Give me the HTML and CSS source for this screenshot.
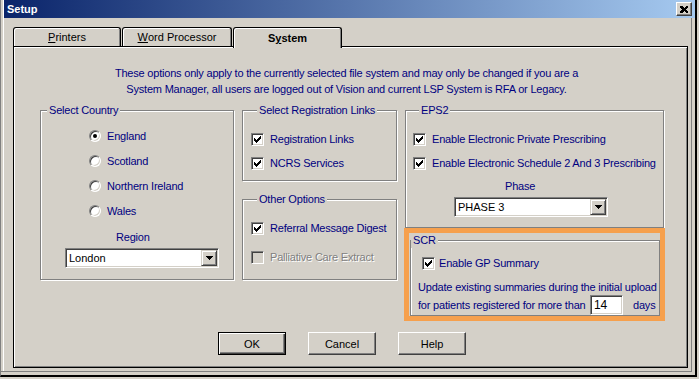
FILE: index.html
```html
<!DOCTYPE html>
<html lang="en">
<head>
    <meta charset="UTF-8">
    <meta name="viewport" content="width=device-width, initial-scale=1.0">
    <title>Setup</title>
    <link rel="stylesheet" href="styles.css">
</head>
<body>
    <div class="window">
        <div class="frame">
            <div class="titlebar">
                <span class="title">Setup</span>
                <button class="close-btn">
                    <svg width="8" height="7" viewBox="0 0 8 7" shape-rendering="crispEdges">
                        <path d="M0 0h2l2 2 2-2h2v1l-2 2.5 2 2.5v1h-2l-2-2-2 2h-2v-1l2-2.5-2-2.5z" fill="#000"/>
                    </svg>
                </button>
            </div>

            <div class="tabs">
                <div class="tab tab-printers"><u>P</u>rinters</div>
                <div class="tab tab-word"><u>W</u>ord Processor</div>
                <div class="tab tab-system active">S<u>y</u>stem</div>
            </div>

            <div class="panel">
                <p class="info">These options only apply to the currently selected file system and may only be changed if you are a<br>System Manager, all users are logged out of Vision and current LSP System is RFA or Legacy.</p>

                <div class="groups">
                    <div class="col col-country">
                        <fieldset class="group country">
                            <legend>Select Country</legend>
                            <div class="radio-list">
                                <label class="opt"><span class="radio checked"></span>England</label>
                                <label class="opt"><span class="radio"></span>Scotland</label>
                                <label class="opt"><span class="radio"></span>Northern Ireland</label>
                                <label class="opt"><span class="radio"></span>Wales</label>
                            </div>
                            <div class="region-label">Region</div>
                            <div class="combo region-combo">
                                <span class="combo-text">London</span>
                                <span class="combo-btn">
                                    <svg width="7" height="4" viewBox="0 0 7 4" shape-rendering="crispEdges"><path d="M0 0h7l-3.5 4z" fill="#000"/></svg>
                                </span>
                            </div>
                        </fieldset>
                    </div>

                    <div class="col col-links">
                        <fieldset class="group links">
                            <legend>Select Registration Links</legend>
                            <label class="opt first"><span class="check on"></span>Registration Links</label>
                            <label class="opt"><span class="check on"></span>NCRS Services</label>
                        </fieldset>
                        <fieldset class="group other">
                            <legend>Other Options</legend>
                            <label class="opt first"><span class="check on"></span>Referral Message Digest</label>
                            <label class="opt disabled"><span class="check"></span>Palliative Care Extract</label>
                        </fieldset>
                    </div>

                    <div class="col col-eps">
                        <fieldset class="group eps">
                            <legend>EPS2</legend>
                            <label class="opt first"><span class="check on"></span>Enable Electronic Private Prescribing</label>
                            <label class="opt"><span class="check on"></span>Enable Electronic Schedule 2 And 3 Prescribing</label>
                            <div class="phase-label">Phase</div>
                            <div class="combo phase-combo">
                                <span class="combo-text">PHASE 3</span>
                                <span class="combo-btn">
                                    <svg width="7" height="4" viewBox="0 0 7 4" shape-rendering="crispEdges"><path d="M0 0h7l-3.5 4z" fill="#000"/></svg>
                                </span>
                            </div>
                        </fieldset>
                        <div class="highlight">
                            <fieldset class="group scr">
                                <legend>SCR</legend>
                                <label class="opt gp"><span class="check on"></span>Enable GP Summary</label>
                                <div class="scr-text">Update existing summaries during the initial upload</div>
                                <div class="scr-line">
                                    <span class="scr-prefix">for patients registered for more than</span>
                                    <span class="field">14</span>
                                    <span class="days">days</span>
                                </div>
                            </fieldset>
                        </div>
                    </div>
                </div>

                <div class="buttons">
                    <button class="btn default">OK</button>
                    <button class="btn">Cancel</button>
                    <button class="btn">Help</button>
                </div>
            </div>
        </div>
    </div>

    <script>
        document.querySelectorAll(".check.on").forEach(e => {
            e.innerHTML = '<svg width="11" height="11" viewBox="1 1 11 11" shape-rendering="crispEdges"><path d="M3 5v3l2 2 5-5v-3l-5 5z" fill="#000"/></svg>';
        });
    </script>
</body>
</html>
```

FILE: styles.css
```css
*{
    box-sizing: border-box;
}
body{
    margin: 0;
    background-color: #d4d0c8;
    font-family: "Liberation Sans", Arial, sans-serif;
    font-size: 11px;
}
.window{
    width: 699px;
    height: 379px;
    padding: 0 2px 2px 0;
    background-color: #d4d0c8;
    overflow: hidden;
}
.frame{
    height: 100%;
    border-left: 1px solid #808080;
    border-right: 2px solid #000;
    border-bottom: 2px solid #000;
    padding-left: 3px;
    box-shadow: inset -3px -3px 0 #d4d0c8, inset -4px -4px 0 #808080,
                inset 2px 0 0 #d4d0c8, inset 3px 0 0 #fff;
}

/* title bar */
.titlebar{
    height: 18px;
    display: flex;
    align-items: center;
    justify-content: space-between;
    padding: 0 3px 0 3px;
    background: linear-gradient(to right, #0a246a, #a6caf0);
}
.title{
    color: #fff;
    font-weight: 700;
    font-size: 11px;
}
.close-btn{
    width: 16px;
    height: 14px;
    padding: 0;
    display: flex;
    align-items: center;
    justify-content: center;
    background-color: #d4d0c8;
    border: 1px solid;
    border-color: #fff #404040 #404040 #fff;
    box-shadow: inset -1px -1px 0 #808080;
}

/* tabs */
.tabs{
    display: flex;
    align-items: flex-end;
    height: 19px;
    margin: 9px 0 0 9px;
}
.tab{
    height: 19px;
    display: flex;
    align-items: center;
    justify-content: center;
    color: #000;
    border: 1px solid #000;
    border-bottom: none;
    border-radius: 3px 3px 0 0;
    box-shadow: inset 1px 1px 0 #fff, inset -1px 0 0 #808080;
}
.tab-printers{
    width: 108px;
    margin-right: 1px;
}
.tab-word{
    width: 110px;
    margin-right: 1px;
}
.tab-system{
    width: 109px;
}
.tab.active{
    height: 21px;
    margin-bottom: -2px;
    position: relative;
    z-index: 1;
    background-color: #d4d0c8;
    font-weight: 700;
}

/* panel */
.panel{
    width: 675px;
    height: 322px;
    margin-left: 9px;
    padding: 18px 22px 0 26px;
    border: 1px solid #000;
    box-shadow: inset 1px 1px 0 #fff, inset -1px -1px 0 #808080;
    color: #000080;
    letter-spacing: -0.2px;
}
.info{
    margin: 0;
    padding-right: 12px;
    text-align: center;
    line-height: 16px;
}
.groups{
    display: flex;
    height: 177px;
    margin-top: 6px;
}
.col{
    display: flex;
    flex-direction: column;
}
.col-country{
    width: 194px;
    margin-right: 8px;
}
.col-links{
    width: 155px;
    margin-right: 7px;
}
.col-eps{
    width: 261px;
}

/* group boxes */
.group{
    margin: 0;
    padding: 0;
    min-width: 0;
    border: 1px solid #808080;
    box-shadow: inset 1px 1px 0 #fff, 1px 1px 0 #fff;
}
.group legend{
    margin-left: 6px;
    padding: 0 2px;
    line-height: 15px;
    background-color: #d4d0c8;
}
.opt{
    height: 24px;
    display: flex;
    align-items: center;
    gap: 6px;
    white-space: nowrap;
}
.opt.disabled{
    color: #808080;
    text-shadow: 1px 1px 0 #fff;
}

.country{
    flex: 1;
}
.radio-list{
    padding: 5px 0 0 48px;
}
.radio-list .opt{
    height: 25px;
}
.region-label{
    margin-top: 6px;
    padding-left: 75px;
    line-height: 16px;
}
.region-combo{
    margin: 3px 0 0 24px;
}

.links{
    padding: 0 0 5px 8px;
}
.links .first, .other .first, .eps .first{
    margin-top: 9px;
}
.other{
    flex: 1;
    margin-top: 11px;
    padding-left: 8px;
}
.other .disabled{
    margin-top: 5px;
}

.eps{
    margin: 0 1px;
    padding: 0 0 10px 7px;
}
.phase-label{
    margin-top: 3px;
    padding-left: 92px;
    line-height: 16px;
}
.phase-combo{
    margin: 3px 0 0 41px;
}

/* orange call-out round the SCR box */
.highlight{
    height: 97px;
    display: flex;
    flex-direction: column;
    padding-left: 1px;
    border: 5px solid #f6a04d;
}
.scr{
    flex: 1;
    box-shadow: inset 1px 1px 0 #fff;
}
.scr legend{
    margin-left: 0;
}
.gp{
    height: 20px;
    margin-top: 5px;
    padding-left: 11px;
    gap: 4px;
}
.scr-text{
    margin-top: 6px;
    padding-left: 7px;
    line-height: 16px;
    white-space: nowrap;
}
.scr-line{
    height: 20px;
    display: flex;
    align-items: center;
    padding-left: 7px;
    white-space: nowrap;
}
.scr-prefix{
    width: 172px;
}
.days{
    margin-left: 10px;
}

/* controls */
.radio{
    width: 12px;
    height: 12px;
    flex-shrink: 0;
    display: flex;
    align-items: center;
    justify-content: center;
    border-radius: 50%;
    background-color: #fff;
    border: 1px solid;
    border-color: #808080 #fff #fff #808080;
    box-shadow: inset 1px 1px 0 #404040, inset -1px -1px 0 #d4d0c8;
}
.radio.checked::after{
    content: "";
    width: 4px;
    height: 4px;
    border-radius: 50%;
    background-color: #000;
}
.check{
    width: 13px;
    height: 13px;
    flex-shrink: 0;
    background-color: #fff;
    border: 1px solid;
    border-color: #808080 #fff #fff #808080;
    box-shadow: inset 1px 1px 0 #404040, inset -1px -1px 0 #d4d0c8;
}
.check svg{
    display: block;
}
.disabled .check{
    background-color: #d4d0c8;
}
.combo{
    width: 154px;
    height: 20px;
    display: flex;
    align-items: stretch;
    padding: 1px;
    background-color: #fff;
    border: 1px solid;
    border-color: #808080 #fff #fff #808080;
    box-shadow: inset 1px 1px 0 #404040, inset -1px -1px 0 #d4d0c8;
    color: #000;
    letter-spacing: 0;
}
.combo-text{
    flex: 1;
    display: flex;
    align-items: center;
    padding-left: 2px;
}
.combo-btn{
    width: 16px;
    display: flex;
    align-items: center;
    justify-content: center;
    background-color: #d4d0c8;
    border: 1px solid;
    border-color: #d4d0c8 #404040 #404040 #d4d0c8;
    box-shadow: inset 1px 1px 0 #fff, inset -1px -1px 0 #808080;
}
.field{
    width: 33px;
    height: 20px;
    display: flex;
    align-items: center;
    padding-left: 3px;
    background-color: #fff;
    border: 1px solid;
    border-color: #808080 #fff #fff #808080;
    box-shadow: inset 1px 1px 0 #404040, inset -1px -1px 0 #d4d0c8;
    color: #000;
    font-size: 12px;
}

/* buttons */
.buttons{
    display: flex;
    gap: 22px;
    margin-top: 52px;
    padding-left: 178px;
}
.btn{
    width: 68px;
    height: 23px;
    padding: 0;
    background-color: #d4d0c8;
    border: 1px solid;
    border-color: #fff #404040 #404040 #fff;
    box-shadow: inset -1px -1px 0 #808080;
    color: #000;
    font-family: "Liberation Sans", Arial, sans-serif;
    font-size: 11px;
}
.btn.default{
    border: 1px solid #000;
    box-shadow: inset 1px 1px 0 #fff, inset -1px -1px 0 #404040, inset -2px -2px 0 #808080;
}
```
